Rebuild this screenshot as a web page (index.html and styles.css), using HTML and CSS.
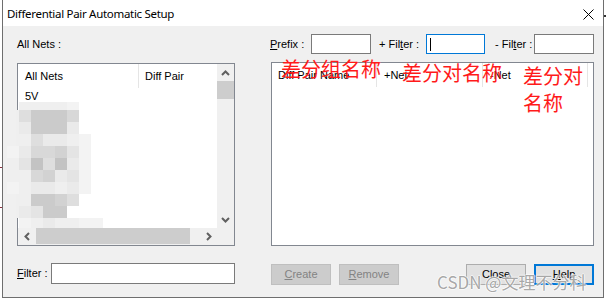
FILE: index.html
```html
<!DOCTYPE html>
<html>
<head>
<meta charset="utf-8">
<title>Differential Pair Automatic Setup</title>
<link rel="stylesheet" href="styles.css">
</head>
<body>
<span class="speck sp1"></span><span class="speck sp2"></span><span class="speck sp3"></span>
<div class="window">
  <div class="titlebar">
    <span class="title">Differential Pair Automatic Setup</span>
    <svg class="close" width="11" height="11" viewBox="0 0 11 11"><path d="M0.5 0.5 L10.5 10.5 M10.5 0.5 L0.5 10.5" stroke="#000" stroke-width="1" fill="none"/></svg>
  </div>
  <div class="content">
    <div class="row top">
      <div class="leftcol center"><span>All Nets :</span></div>
      <div class="rightcol filters">
        <span class="f-lbl f1"><u>P</u>refix :</span><div class="input w60"></div>
        <span class="f-lbl f2">+ Fil<u>t</u>er :</span><div class="input focus w59"><span class="caret"></span></div>
        <span class="f-lbl f3">- Fil<u>t</u>er :</span><div class="input w60"></div>
      </div>
    </div>
    <div class="row lists">
      <div class="listbox lb-left">
        <div class="lb-main">
          <div class="hdr">
            <div class="hc l1">All Nets</div>
            <div class="hc l2">Diff Pair</div>
          </div>
          <div class="item">5V</div>
        </div>
        <div class="vscroll">
          <div class="sbtn"><svg width="9" height="6" viewBox="0 0 9 6"><polyline points="1,5 4.5,1.5 8,5" fill="none" stroke="#606060" stroke-width="2"/></svg></div>
          <div class="vthumb"></div>
          <div class="sfill"></div>
          <div class="sbtn"><svg width="9" height="6" viewBox="0 0 9 6"><polyline points="1,1 4.5,4.5 8,1" fill="none" stroke="#606060" stroke-width="2"/></svg></div>
        </div>
        <div class="hscroll">
          <div class="sbtn"><svg width="6" height="9" viewBox="0 0 6 9"><polyline points="5,1 1.5,4.5 5,8" fill="none" stroke="#606060" stroke-width="2"/></svg></div>
          <div class="hthumb"></div>
          <div class="sfill"></div>
          <div class="sbtn"><svg width="6" height="9" viewBox="0 0 6 9"><polyline points="1,1 4.5,4.5 1,8" fill="none" stroke="#606060" stroke-width="2"/></svg></div>
        </div>
        <div class="corner"></div>
      </div>
      <div class="listbox lb-right">
        <div class="hdr">
          <div class="hc r1">Diff Pair Name</div>
          <div class="hc r2">+Net</div>
          <div class="hc r3">-Net</div>
        </div>
      </div>
    </div>
    <div class="row bottom">
      <div class="leftcol filterrow">
        <span class="b-lbl"><u>F</u>ilter :</span><div class="input w184"></div>
      </div>
      <div class="rightcol buttons">
        <div class="btn disabled"><u>C</u>reate</div>
        <div class="btn disabled"><u>R</u>emove</div>
        <div class="btn push">Close</div>
        <div class="btn default"><u>H</u>elp</div>
      </div>
    </div>
  </div>

  <div class="mosaic">
    <i></i><i class="s2"></i><i class="s2"></i><i class="s2"></i><i class="s2"></i><i class="s1"></i><i></i><i></i>
    <i class="h"></i><i class="s5"></i><i class="s8"></i><i class="s8"></i><i class="s8"></i><i class="s6"></i><i></i><i></i>
    <i class="h"></i><i class="s3"></i><i class="s8"></i><i class="s8"></i><i class="s8"></i><i class="s3"></i><i></i><i></i>
    <i class="h"></i><i class="s2"></i><i class="s5"></i><i class="s3"></i><i class="s3"></i><i class="s2"></i><i class="s1"></i><i></i>
    <i class="s1"></i><i class="s3"></i><i class="s6"></i><i class="s6"></i><i class="s7"></i><i class="s4"></i><i class="s1"></i><i></i>
    <i class="s2"></i><i class="s4"></i><i class="s9"></i><i class="s5"></i><i class="s9"></i><i class="s3"></i><i class="s1"></i><i></i>
    <i class="s2"></i><i class="s2"></i><i class="s6"></i><i class="s7"></i><i class="s3"></i><i class="s4"></i><i class="s1"></i><i></i>
    <i class="s1"></i><i class="s2"></i><i class="s3"></i><i class="s3"></i><i class="s2"></i><i class="s3"></i><i class="s1"></i><i></i>
    <i class="h"></i><i class="s2"></i><i class="s8"></i><i class="s8"></i><i class="s7"></i><i class="s5"></i><i></i><i></i>
    <i class="h"></i><i class="s3"></i><i class="s4"></i><i class="s8"></i><i class="s8"></i><i></i><i></i><i></i>
    <i></i><i class="s1"></i><i class="s2"></i><i class="s3"></i><i class="s2"></i><i class="s2"></i><i class="s1"></i><i class="s1"></i>
  </div>

  <div class="note n1">差分组名称</div>
  <div class="note n2">差分对名称</div>
  <div class="note n3">差分对<br>名称</div>

  <div class="watermark">CSDN @文理不分科</div>
</div>
</body>
</html>
```

FILE: styles.css
```css
* { box-sizing: border-box; }
html, body { margin: 0; padding: 0; }
body {
  width: 606px;
  height: 300px;
  overflow: hidden;
  position: relative;
  background: #ffffff;
  font-family: "Liberation Sans", Arial, sans-serif;
  font-size: 11px;
  color: #000;
}
u { text-decoration: underline; text-underline-offset: 1px; }

.speck { position: absolute; display: block; height: 1px; }
.sp1 { left: 0; top: 167px; width: 2px; background: #8a3040; }
.sp2 { left: 0; top: 207px; width: 2px; background: #8a3040; }
.sp3 { left: 604px; top: 15px; width: 2px; height: 2px; background: #333; }

.window {
  position: relative;
  margin-left: 2px;
  width: 602px;
  height: 298px;
  border: 1px solid #6e6e6e;
  border-top: none;
  background: #f0f0f0;
  display: flex;
  flex-direction: column;
}

.titlebar {
  flex: none;
  height: 26px;
  background: #fff;
  display: flex;
  align-items: center;
  padding-left: 4px;
  position: relative;
}
.title {
  font-family: "Noto Sans", "Liberation Sans", sans-serif;
  font-size: 11.5px;
  letter-spacing: -0.3px;
  color: #000;
}
.close { position: absolute; left: 580px; top: 9px; }

.content {
  flex: 1;
  padding: 8px 9px 0 14px;
  display: flex;
  flex-direction: column;
}
.row { display: flex; gap: 36px; }
.leftcol { width: 218px; flex: none; }
.rightcol { width: 323px; flex: none; }
.center { display: flex; align-items: center; }

.row.top { height: 20px; }
.filters {
  display: flex;
  align-items: center;
  margin-left: -1px;
  width: 324px;
}
.f-lbl { display: block; flex: none; white-space: nowrap; }
.f1 { width: 41px; }
.f2 { width: 55px; padding-left: 8px; }
.f3 { width: 49px; padding-left: 10px; }

.input {
  flex: none;
  height: 20px;
  background: #fff;
  border: 1px solid #7a7a7a;
  position: relative;
}
.input.focus { border-color: #0078d7; }
.w60 { width: 60px; }
.w59 { width: 59px; }
.w184 { width: 184px; height: 21px; }
.caret {
  position: absolute;
  left: 3px;
  top: 3px;
  width: 1px;
  height: 13px;
  background: #000;
}

.row.lists { margin-top: 8px; align-items: flex-end; }
.listbox {
  flex: none;
  background: #fff;
  border: 1px solid #828790;
}
.lb-left {
  width: 218px;
  height: 183px;
  display: grid;
  grid-template-columns: 1fr 17px;
  grid-template-rows: 1fr 17px;
}
.lb-right { width: 323px; height: 184px; }

.hdr { display: flex; height: 24px; }
.hc {
  height: 24px;
  line-height: 24px;
  border-right: 1px solid #e5e5e5;
  white-space: nowrap;
  overflow: visible;
}
.l1 { width: 121px; padding-left: 7px; }
.l2 { width: 78px; padding-left: 6px; border-right: none; }
.r1 { width: 105px; padding-left: 6px; }
.r2 { width: 106px; padding-left: 7px; }
.r3 { width: 105px; padding-left: 7px; }

.item { height: 17px; line-height: 17px; padding-left: 7px; }

.vscroll, .hscroll { background: #f0f0f0; display: flex; }
.vscroll { flex-direction: column; }
.sbtn {
  flex: none;
  width: 17px;
  height: 17px;
  display: flex;
  align-items: center;
  justify-content: center;
}
.sbtn svg { display: block; }
.sfill { flex: 1; }
.vthumb { flex: none; height: 18px; background: #cdcdcd; }
.hthumb { flex: none; width: 154px; margin-left: 1px; background: #cdcdcd; height: 16px; }
.corner { background: #f0f0f0; }

.row.bottom { margin-top: 17px; height: 22px; }
.filterrow { display: flex; align-items: flex-start; }
.b-lbl { width: 34px; flex: none; line-height: 21px; }

.buttons { display: flex; align-items: flex-start; gap: 8px; }
.btn {
  flex: none;
  width: 60px;
  height: 21px;
  margin-top: 1px;
  line-height: 19px;
  text-align: center;
  border: 1px solid #adadad;
  background: #e1e1e1;
  color: #000;
}
.btn.disabled { background: #cccccc; border-color: #bfbfbf; color: #838383; }
.btn.push { margin-left: auto; }
.btn.default { border: 2px solid #0078d7; line-height: 17px; }

.mosaic {
  position: absolute;
  left: 4px;
  top: 102px;
  display: grid;
  grid-template-columns: repeat(8, 12px);
  grid-template-rows: 8px repeat(9, 12px) 10px;
}
.mosaic i { display: block; }
.mosaic .h { background: linear-gradient(to right, transparent 9px, #efefef 9px); }
.s1 { background: #f3f3f3; }
.s2 { background: #efefef; }
.s3 { background: #eaeaea; }
.s4 { background: #e4e4e4; }
.s5 { background: #dedede; }
.s6 { background: #d8d8d8; }
.s7 { background: #d2d2d2; }
.s8 { background: #cbcbcb; }
.s9 { background: #c3c3c3; }

.note {
  position: absolute;
  font-family: "Noto Sans CJK SC", sans-serif;
  font-size: 20px;
  line-height: 20px;
  color: #ff1a1a;
  white-space: nowrap;
}
.n1 { left: 278px; top: 59px; }
.n2 { left: 399px; top: 63px; }
.n3 { left: 520px; top: 62px; line-height: 27px; }

.watermark {
  position: absolute;
  left: 434px;
  top: 271px;
  font-family: "Noto Sans CJK SC", sans-serif;
  font-size: 17px;
  line-height: 22px;
  color: rgba(130, 130, 130, 0.7);
  text-shadow: 1px 0 0 rgba(255,255,255,0.6), -1px 0 0 rgba(255,255,255,0.6), 0 1px 0 rgba(255,255,255,0.6), 0 -1px 0 rgba(255,255,255,0.6);
  white-space: nowrap;
}
```
